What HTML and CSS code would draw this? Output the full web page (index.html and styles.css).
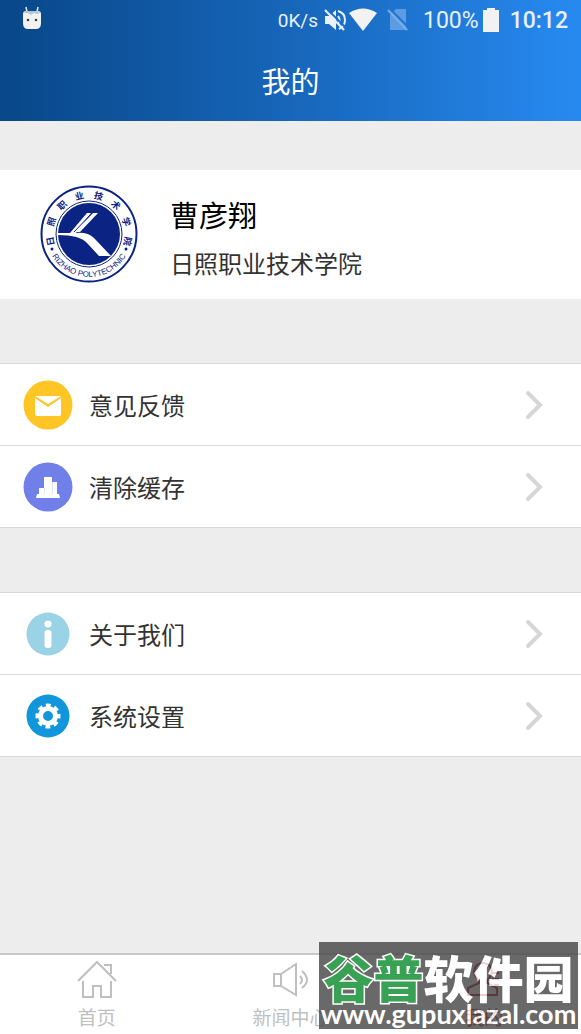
FILE: index.html
```
<!DOCTYPE html>
<html lang="zh-CN">
<head>
    <meta charset="UTF-8">
    <meta name="viewport" content="width=device-width, initial-scale=1.0">
    <title>我的</title>
    <link rel="stylesheet" href="styles.css">
</head>
<body>
    <header class="header">
        <div class="status-bar">
            <svg class="icon-robot" width="20" height="24" viewBox="0 0 20 24">
                <path d="M4 1L5 6M16 1L15 6" stroke="#dbe6f2" stroke-width="1.5"/>
                <path d="M1 8Q1 5 4 5H16Q19 5 19 8V17Q19 23 14 23H6Q1 23 1 17Z" fill="#f2f2f2"/>
                <path d="M2 7Q3 5 5 5H15Q17 5 18 7L15 8L12 7L9 9L6 7Z" fill="#b4c6da"/>
                <circle cx="6" cy="14" r="1.3" fill="#444"/>
                <circle cx="14" cy="14" r="1.3" fill="#444"/>
            </svg>
            <div class="status-right">
                <span class="speed">0K/s</span>
                <svg width="22" height="22" viewBox="0 0 22 22">
                    <path d="M1 7H5L12 1V21L5 15H1Z" fill="#e8f1fb"/>
                    <path d="M14 7Q17 11 14 15M14 2Q21 4 21 11Q21 17 15 20" fill="none" stroke="#e8f1fb" stroke-width="2"/>
                    <path d="M3 0L22 19" stroke="#1c70cc" stroke-width="2"/>
                    <path d="M1 1L20 21" stroke="#e8f1fb" stroke-width="2"/>
                </svg>
                <svg class="icon-wifi" width="28" height="24" viewBox="0 0 28 24">
                    <path d="M0 5Q14 -4 28 5L14 23Z" fill="#f2f2f2"/>
                </svg>
                <svg class="icon-sim" width="22" height="24" viewBox="0 0 22 24">
                    <path d="M9 1H19V22H3V7Z" fill="#5c9ce2"/>
                    <path d="M3 1L22 20" stroke="#1f75d2" stroke-width="2"/>
                    <path d="M1 2L20 22" stroke="#78aeea" stroke-width="2"/>
                </svg>
                <span class="percent">100%</span>
                <svg class="icon-battery" width="16" height="24" viewBox="0 0 16 24">
                    <path d="M4 0H12V2H16V24H0V2H4Z" fill="#f2f2f2"/>
                </svg>
                <span class="clock">10:12</span>
            </div>
        </div>
        <h1 class="title">我的</h1>
    </header>

    <main class="content">
        <section class="profile">
            <svg class="avatar" viewBox="0 0 98 98">
                <defs>
                    <path id="arcTop" d="M16.400 64.200A36 36 0 1 1 81.600 64.200"/>
                    <path id="arcBottom" d="M6 49A43 43 0 0 0 92 49"/>
                </defs>
                <circle cx="49" cy="49" r="47.500" fill="#fff" stroke="#0b2383" stroke-width="2"/>
                <circle cx="49" cy="49" r="33" fill="#fff" stroke="#0b2383" stroke-width="1"/>
                <circle cx="49" cy="49" r="31" fill="#0b2383"/>
                <path d="M18 48H30L47 28H51L36 48Q48 47 54 53L71 71H59L47 58Q40 50 18 50Z" fill="#fff"/>
                <path d="M35 47L53 28H58L40 47Z" fill="#fff"/>
                <path d="M34 47L52 28" stroke="#0b2383" stroke-width="1"/>
                <circle cx="12" cy="64" r="1.500" fill="#0b2383"/>
                <circle cx="86" cy="64" r="1.500" fill="#0b2383"/>
                <text class="seal-cn"><textPath href="#arcTop" startOffset="50%" text-anchor="middle">日　照　职　业　技　术　学　院</textPath></text>
                <text class="seal-en"><textPath href="#arcBottom" startOffset="50%" text-anchor="middle">RIZHAO POLYTECHNIC</textPath></text>
            </svg>
            <div class="profile-text">
                <div class="name">曹彦翔</div>
                <div class="school">日照职业技术学院</div>
            </div>
        </section>

        <nav class="menu">
            <a class="menu-item" href="#">
                <svg class="menu-icon" viewBox="0 0 50 50">
                    <circle cx="25" cy="25" r="24.500" fill="#fec524"/>
                    <path d="M12 16H38L25 24Z" fill="#fff"/>
                    <path d="M12 18L25 27L38 18V34Q38 36 36 36H14Q12 36 12 34Z" fill="#fff"/>
                </svg>
                <span class="label">意见反馈</span>
                <svg class="chevron" viewBox="0 0 18 30"><path d="M3 3L15 15L3 27"/></svg>
            </a>
            <a class="menu-item" href="#">
                <svg class="menu-icon" viewBox="0 0 50 50">
                    <circle cx="25" cy="25" r="24.500" fill="#7080e8"/>
                    <path d="M16 34V26H21V15H29V20H34V34Z" fill="#fff"/>
                    <path d="M14 32H36L37 36H13Z" fill="#fff"/>
                    <path d="M21.500 26V32M29.500 20V32" stroke="#dde1fb" stroke-width="1"/>
                </svg>
                <span class="label">清除缓存</span>
                <svg class="chevron" viewBox="0 0 18 30"><path d="M3 3L15 15L3 27"/></svg>
            </a>
        </nav>

        <nav class="menu">
            <a class="menu-item" href="#">
                <svg class="menu-icon" viewBox="0 0 50 50">
                    <circle cx="25" cy="25" r="21.500" fill="#9ad3e6"/>
                    <circle cx="25" cy="15" r="3.500" fill="#fff"/>
                    <rect x="21.500" y="21" width="7" height="18" rx="3" fill="#fff"/>
                </svg>
                <span class="label">关于我们</span>
                <svg class="chevron" viewBox="0 0 18 30"><path d="M3 3L15 15L3 27"/></svg>
            </a>
            <a class="menu-item" href="#">
                <svg class="menu-icon" viewBox="0 0 50 50">
                    <circle cx="25" cy="25" r="21.500" fill="#1296db"/>
                    <circle cx="25" cy="25" r="10.500" fill="none" stroke="#fff" stroke-width="4" stroke-dasharray="4.650 3.597" stroke-dashoffset="2.320"/>
                    <circle cx="25" cy="25" r="7.500" fill="none" stroke="#fff" stroke-width="5"/>
                </svg>
                <span class="label">系统设置</span>
                <svg class="chevron" viewBox="0 0 18 30"><path d="M3 3L15 15L3 27"/></svg>
            </a>
        </nav>
    </main>

    <footer class="footer">
        <nav class="tabs">
            <a class="tab" href="#">
                <svg class="tab-icon" viewBox="0 0 40 40">
                    <path d="M1 21L20 2L39 21M27 5H34V14M6 21V37H16V26H24V37H34V21"/>
                </svg>
                <span>首页</span>
            </a>
            <a class="tab" href="#">
                <svg class="tab-icon" viewBox="0 0 40 40">
                    <path d="M10 14H3V26H10M10 14L25 4V35L10 26ZM29 16Q33 20 29 24M31 11Q41 20 31 28"/>
                </svg>
                <span>新闻中心</span>
            </a>
            <a class="tab active" href="#">
                <svg class="tab-icon" viewBox="0 0 40 40">
                    <path d="M15 20C6 13 11 3 19 3S32 13 23 20V23L33 28V35H4V28L15 23ZM28 13H35M28 19H35M30 25H35"/>
                </svg>
                <span>我的</span>
            </a>
        </nav>
        <div class="watermark">
            <div class="mark-name"><span class="green">谷普</span>软件园</div>
            <div class="mark-url">www.gupuxlazal.com</div>
        </div>
    </footer>
</body>
</html>
```

FILE: styles.css
```
* {
    box-sizing: border-box;
}
body {
    margin: 0;
    min-height: 100vh;
    display: flex;
    flex-direction: column;
    background-color: #ededed;
    color: #333;
    font-family: "Noto Sans CJK SC", sans-serif;
}
a {
    color: inherit;
    text-decoration: none;
}
.header {
    height: 121px;
    background: linear-gradient(to right, #084788, #1766ba 50%, #278af0);
    color: white;
}
.status-bar {
    display: flex;
    justify-content: space-between;
    align-items: center;
    height: 40px;
    padding: 0 13px 0 22px;
    font-family: Roboto, sans-serif;
    color: #e8f1fb;
}
.icon-robot {
    margin-bottom: 4px;
}
.status-right {
    display: flex;
    align-items: center;
}
.speed {
    font-size: 19px;
    margin-right: 6px;
}
.icon-wifi {
    margin-left: 3px;
}
.icon-sim {
    margin: 0 14px 0 10px;
}
.percent {
    font-size: 23px;
}
.icon-battery {
    margin: 0 11px 0 4px;
}
.clock {
    font-size: 23px;
    font-weight: 500;
}
.title {
    margin: 0;
    font-size: 29px;
    font-weight: 400;
    line-height: 80px;
    text-align: center;
}
.content {
    flex: 1;
}
.profile {
    display: flex;
    align-items: center;
    margin-top: 49px;
    padding: 15px 40px 16px;
    background-color: white;
}
.avatar {
    width: 98px;
    height: 98px;
    margin-right: 32px;
}
.seal-cn {
    font-size: 9px;
    font-weight: 700;
    fill: #0b2383;
}
.seal-en {
    font-family: "Liberation Sans", sans-serif;
    font-size: 8px;
    fill: #0b2383;
}
.profile-text {
    padding-top: 8px;
}
.name {
    color: black;
    font-size: 29px;
    line-height: 40px;
}
.school {
    margin-top: 10px;
    font-size: 24px;
    line-height: 38px;
}
.menu {
    margin-top: 64px;
    border-top: 1px solid #d9d9d9;
}
.menu-item {
    display: flex;
    align-items: center;
    height: 82px;
    padding: 0 38px 0 23px;
    background-color: white;
    border-bottom: 1px solid #d9d9d9;
}
.menu-icon {
    width: 50px;
    height: 50px;
    margin-right: 16px;
}
.label {
    flex: 1;
    font-size: 24px;
    line-height: 38px;
}
.chevron {
    width: 18px;
    height: 30px;
    fill: none;
    stroke: #d6d6d6;
    stroke-width: 4;
    stroke-linecap: round;
}
.footer {
    position: relative;
}
.tabs {
    display: flex;
    height: 81px;
    background-color: white;
    border-top: 2px solid #c8c8c8;
}
.tab {
    flex: 1;
    display: flex;
    flex-direction: column;
    align-items: center;
    padding-top: 5px;
    color: #bfbfbf;
    font-size: 19px;
    line-height: 34px;
}
.tab-icon {
    width: 40px;
    height: 40px;
    fill: none;
    stroke: currentColor;
    stroke-width: 2;
}
.active {
    color: #a8102a;
}
/* site stamp over the tab bar */
.watermark {
    position: absolute;
    right: 3px;
    bottom: 5px;
    width: 259px;
    height: 87px;
    padding-top: 9px;
    background-color: #444;
    color: white;
    text-align: center;
    white-space: nowrap;
    opacity: 0.8;
}
.mark-name {
    font-size: 50px;
    font-weight: 900;
    line-height: 50px;
}
.green {
    color: #088a2a;
    -webkit-text-stroke: 3px white;
    paint-order: stroke fill;
}
.mark-url {
    font-family: Lato, sans-serif;
    font-size: 27px;
    font-weight: 700;
    line-height: 26px;
}
```
